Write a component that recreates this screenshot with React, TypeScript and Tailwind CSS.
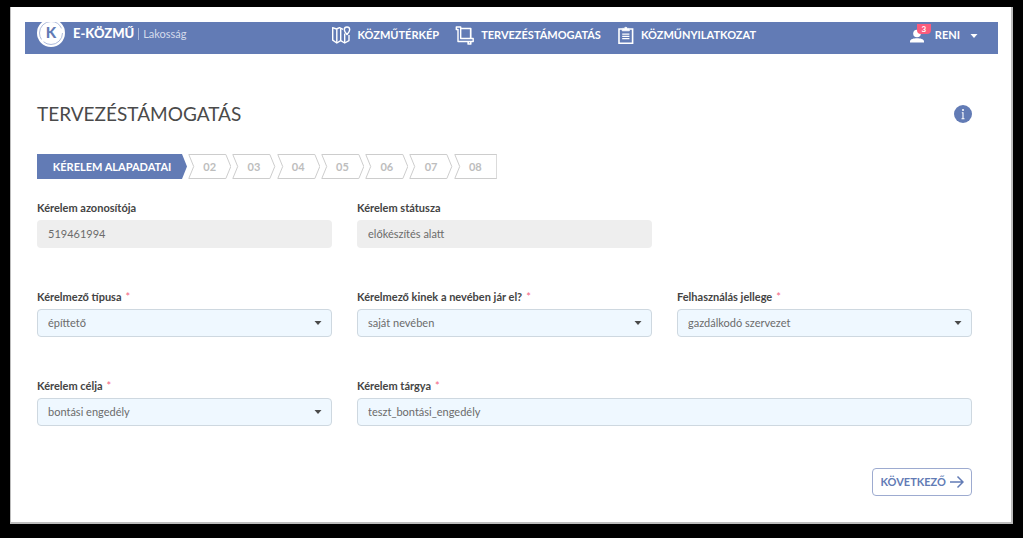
import type { ReactNode } from "react";

const STEPS = ["02", "03", "04", "05", "06", "07", "08"];

function MapIcon() {
  return (
    <svg viewBox="0 0 20 20" className="h-5 w-5 shrink-0" fill="none" stroke="currentColor" strokeWidth="1.4" strokeLinejoin="round" aria-hidden="true">
      <path d="M12 4.400 8.500 2.600 5.500 4 1.700 2.600v12.600L5.800 18l3.900-2.400 4 2.400 4.300-2.400V10" />
      <path d="M5.800 4.200V18M9.700 3.400v12.200M13.700 8.500V18" />
      <path d="M16 9.600c-1.500-1.800-2.700-3.200-2.700-4.900a2.700 2.700 0 0 1 5.400 0c0 1.700-1.200 3.100-2.700 4.900z" />
    </svg>
  );
}

function CropIcon() {
  return (
    <svg viewBox="0 0 20 20" className="h-5 w-5 shrink-0" fill="none" stroke="currentColor" strokeWidth="1.4" strokeLinejoin="round" aria-hidden="true">
      <path d="M3 4.500H1.300V2h4.400v11.500h12.500v3H3z" />
      <path d="M5.700 3.500h10v10M15.700 16.500V19h-2.500v-2.500" strokeWidth="1.700" />
    </svg>
  );
}

function ClipboardIcon() {
  return (
    <svg viewBox="0 0 18 20" className="h-5 w-[18px] shrink-0" fill="none" stroke="currentColor" aria-hidden="true">
      <path d="M5 4H2v14.200h13.600V4h-3" strokeWidth="1.600" />
      <path d="M5.200 5.800V3.400h2a1.700 1.700 0 0 1 3.200 0h2v2.400z" fill="currentColor" strokeWidth=".8" />
      <path d="M5.200 9.200h7.200M5.200 11.400h7.200M5.200 13.600h7.200" strokeWidth="1.300" />
    </svg>
  );
}

function Logo() {
  return (
    <svg viewBox="0 0 28 28" className="h-7 w-7 shrink-0" aria-hidden="true">
      <circle cx="14" cy="14" r="14" fill="#fff" />
      <circle cx="14" cy="14" r="11.500" fill="none" stroke="#8b9dca" strokeWidth=".7" strokeDasharray="26 3 38 5" />
      <text x="14" y="19" textAnchor="middle" fontFamily="Lato, sans-serif" fontWeight="900" fontSize="15" fill="#627bb5">K</text>
    </svg>
  );
}

function NavItem({ icon, children }: { icon: ReactNode; children: ReactNode }) {
  return (
    <a href="#" className="flex items-center gap-1.5 text-[11px] font-bold">
      {icon}
      {children}
    </a>
  );
}

function Label({ id, text, required }: { id: string; text: string; required?: boolean }) {
  return (
    <label htmlFor={id} className="block text-[11px] leading-4 font-bold text-[#444]">
      {text}
      {required && <span className="ml-1 font-normal text-[#f4647f]">*</span>}
    </label>
  );
}

function TextField({ id, label, value, readOnly, required, wide }: { id: string; label: string; value: string; readOnly?: boolean; required?: boolean; wide?: boolean }) {
  return (
    <div className={wide ? "col-span-2 space-y-1" : "space-y-1"}>
      <Label id={id} text={label} required={required} />
      <input
        id={id}
        defaultValue={value}
        readOnly={readOnly}
        className={
          readOnly
            ? "block h-7 w-full rounded-sm bg-[#eeeeee] px-[11px] pb-0.5 text-[11px] text-[#6b6b6b]"
            : "block h-7 w-full rounded-sm border border-[#ced8e0] bg-[#eff8ff] px-2.5 pb-0.5 text-[11px] text-[#6b6b6b]"
        }
      />
    </div>
  );
}

function SelectField({ id, label, value }: { id: string; label: string; value: string }) {
  return (
    <div className="space-y-1">
      <Label id={id} text={label} required />
      <div className="relative">
        <select id={id} defaultValue={value} className="block h-7 w-full appearance-none rounded-sm border border-[#ced8e0] bg-[#eff8ff] px-2.5 text-[11px] text-[#6b6b6b]">
          <option>{value}</option>
        </select>
        <svg viewBox="0 0 8 4" className="pointer-events-none absolute top-3 right-2.5 h-1 w-2" aria-hidden="true">
          <path d="M.5 0h7L4 4z" fill="#4a4a4a" />
        </svg>
      </div>
    </div>
  );
}

export default function App() {
  return (
    <div className="flex min-h-screen flex-col bg-black pt-[7px] pr-2.5 pb-3.5 pl-2.5 font-['Lato',sans-serif]">
      <div className="flex-1 border-r-2 border-b-2 border-l border-[#bdbdbd] bg-white pt-[15px] pr-[13px] pl-3.5">
        <header className="flex h-8 items-start justify-between overflow-hidden bg-[#627bb5] pr-5 pl-3 text-white">
          <div className="-mt-[3px] flex items-center gap-2">
            <Logo />
            <div className="flex items-center gap-1 pt-0.5">
              <span className="text-[13px] font-black">E-KÖZMŰ</span>
              <span className="h-3 w-px bg-[#a9b7d8]" />
              <span className="text-[11px] text-[#d5dcec]">Lakosság</span>
            </div>
          </div>
          <nav className="mr-2 flex items-center gap-4 pt-[3px]">
            <NavItem icon={<MapIcon />}>KÖZMŰTÉRKÉP</NavItem>
            <NavItem icon={<CropIcon />}>TERVEZÉSTÁMOGATÁS</NavItem>
            <NavItem icon={<ClipboardIcon />}>KÖZMŰNYILATKOZAT</NavItem>
          </nav>
          <button type="button" className="flex h-6 items-center gap-2.5 pt-[3px] text-[11px] font-bold">
            <span className="relative">
              <svg viewBox="0 0 16 16" className="h-4 w-4" fill="currentColor" aria-hidden="true">
                <circle cx="8" cy="5.500" r="3.800" />
                <path d="M1 14.500v-1.200C1 11 5 10.200 8 10.200s7 .8 7 3.100v1.200z" />
              </svg>
              <span className="absolute -top-1 left-2 flex h-2.5 w-3.5 items-center justify-center rounded-b-sm bg-[#fa5c7c] text-[8px] leading-none">3</span>
            </span>
            RENI
            <svg viewBox="0 0 8 4" className="h-1 w-2" fill="currentColor" aria-hidden="true">
              <path d="M.5 0h7L4 4z" />
            </svg>
          </button>
        </header>

        <main className="pt-[46px] pr-[26px] pb-6 pl-3">
          <div className="flex h-7 items-center justify-between">
            <h1 className="text-[19px] text-[#4a4a4a]">TERVEZÉSTÁMOGATÁS</h1>
            <button type="button" aria-label="Információ" className="text-[#627bb5]">
              <svg viewBox="0 0 18 18" className="block h-[18px] w-[18px]" aria-hidden="true">
                <circle cx="9" cy="9" r="9" fill="currentColor" />
                <circle cx="9" cy="5" r="1" fill="#fff" />
                <path d="M7.800 7.800H9v6M7.500 13.700h3" fill="none" stroke="#fff" strokeWidth="1.100" />
              </svg>
            </button>
          </div>

          <ol className="mt-[26px] flex h-[25px] max-w-[460px] gap-px text-[11px] font-bold text-[#bdbdbd]">
            <li className="relative flex w-[150px] shrink-0 items-center justify-center text-white" aria-current="step">
              <svg viewBox="0 0 150 25" preserveAspectRatio="none" className="absolute inset-0 h-full w-full" aria-hidden="true">
                <path d="M0 0h145l5 12.500-5 12.500H0z" fill="#627bb5" />
              </svg>
              <span className="relative pt-0.5">KÉRELEM ALAPADATAI</span>
            </li>
            {STEPS.map((step, i) => (
              <li key={step} className="relative flex flex-1 items-center justify-center">
                <svg viewBox="0 0 44 25" preserveAspectRatio="none" className="absolute inset-0 h-full w-full" fill="none" stroke="#cccccc" aria-hidden="true">
                  <path d={i === STEPS.length - 1 ? "M.8.5h42.700v24H.8l5-12z" : "M.8.5h37.700l5 12-5 12H.8l5-12z"} />
                </svg>
                <span className="relative pt-0.5">{step}</span>
              </li>
            ))}
          </ol>

          <form>
            <div className="mt-[21px] grid grid-cols-3 gap-x-[25px] gap-y-[41px]">
              <TextField id="azonosito" label="Kérelem azonosítója" value="519461994" readOnly />
              <TextField id="statusz" label="Kérelem státusza" value="előkészítés alatt" readOnly />
              <div />
              <SelectField id="tipus" label="Kérelmező típusa" value="építtető" />
              <SelectField id="kinek" label="Kérelmező kinek a nevében jár el?" value="saját nevében" />
              <SelectField id="jelleg" label="Felhasználás jellege" value="gazdálkodó szervezet" />
              <SelectField id="cel" label="Kérelem célja" value="bontási engedély" />
              <TextField id="targy" label="Kérelem tárgya" value="teszt_bontási_engedély" required wide />
            </div>
            <div className="mt-[42px] flex justify-end">
              <button type="button" className="flex h-7 items-center gap-1 rounded-sm border border-[#9dabd0] px-[7px] text-[11px] font-bold text-[#627bb5]">
                KÖVETKEZŐ
                <svg viewBox="0 0 14 14" className="h-3.5 w-3.5" fill="none" stroke="currentColor" strokeWidth="1.500" aria-hidden="true">
                  <path d="M0 7h12.500M7.500 1.500 13 7l-5.500 5.500" />
                </svg>
              </button>
            </div>
          </form>
        </main>
      </div>
    </div>
  );
}
